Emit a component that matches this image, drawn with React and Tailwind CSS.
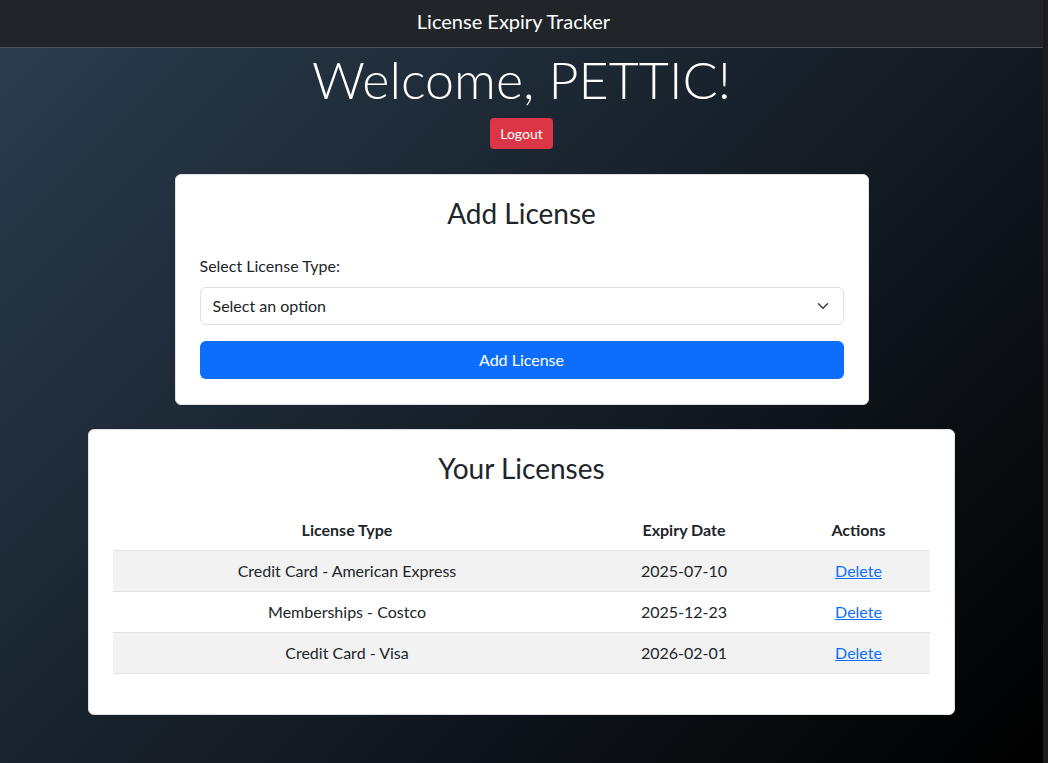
import { useState } from "react";

const licenses = [
  { id: 1, type: "Credit Card - American Express", expiry: "2025-07-10" },
  { id: 2, type: "Memberships - Costco", expiry: "2025-12-23" },
  { id: 3, type: "Credit Card - Visa", expiry: "2026-02-01" },
];

export default function App() {
  const [choice, setChoice] = useState("");
  const [rows, setRows] = useState(licenses);

  return (
    <div className="flex min-h-[763px] font-['Lato','Noto_Sans',sans-serif] text-[#212529]">
      <div className="flex-1 min-h-[763px] bg-[linear-gradient(135deg,#2c3e50,#000)]">
        <nav className="flex h-12 items-center justify-center border-b border-[#4b5056] bg-[#212529] pb-[5px]">
          <span className="mr-4 text-[20px] text-white">License Expiry Tracker</span>
        </nav>

        <div className="flex flex-col items-center pb-12">
          <h1 className="text-[52px] font-light leading-[62px] text-white">Welcome, PETTIC!</h1>
          <button className="mt-2 h-[31px] rounded-[4px] bg-[#dc3545] px-[10px] text-[14px] leading-[21px] text-white">
            Logout
          </button>

          <section className="mt-[25px] w-[694px] rounded-md border border-[#dee2e6] bg-white px-6 pt-6 pb-[25px]">
            <h3 className="mb-[27px] text-center text-[28px] leading-[28px]">Add License</h3>
            <label className="mb-[9px] block text-[16px] leading-6">Select License Type:</label>
            <div className="relative mb-4">
              <select
                value={choice}
                onChange={(e) => setChoice(e.target.value)}
                className="block h-[38px] w-full appearance-none rounded-md border border-[#dee2e6] bg-white px-3 text-[16px] outline-none"
              >
                <option value="">Select an option</option>
                <option value="cc">Credit Card</option>
                <option value="mem">Memberships</option>
              </select>
              <svg
                className="pointer-events-none absolute right-[13px] top-[13px]"
                width="16" height="12" viewBox="0 0 16 16" fill="none"
                stroke="#343a40" strokeWidth="2" strokeLinecap="round" strokeLinejoin="round"
              >
                <path d="m2 5 6 6 6-6" />
              </svg>
            </div>
            <button className="h-[38px] w-full rounded-md bg-[#0d6efd] text-[16px] text-white">
              Add License
            </button>
          </section>

          <section className="mt-6 w-[867px] rounded-md border border-[#dee2e6] bg-white p-6">
            <h2 className="mb-[28px] text-center text-[28px] leading-[28px]">Your Licenses</h2>
            <table className="mb-4 w-full border-collapse text-center text-[16px] leading-6">
              <thead>
                <tr className="border-b border-[#dee2e6]">
                  <th className="w-[468px] py-2 font-bold">License Type</th>
                  <th className="w-[206px] py-2 font-bold">Expiry Date</th>
                  <th className="py-2 font-bold">Actions</th>
                </tr>
              </thead>
              <tbody>
                {rows.map((r, i) => (
                  <tr key={r.id} className={`border-b border-[#dee2e6] ${i % 2 === 0 ? "bg-[#f2f2f2]" : "bg-white"}`}>
                    <td className="py-2">{r.type}</td>
                    <td className="py-2">{r.expiry}</td>
                    <td className="py-2">
                      <a
                        href="#"
                        onClick={(e) => { e.preventDefault(); setRows(rows.filter((x) => x.id !== r.id)); }}
                        className="text-[#0d6efd] underline"
                      >
                        Delete
                      </a>
                    </td>
                  </tr>
                ))}
              </tbody>
            </table>
          </section>
        </div>
      </div>
      <div className="w-[5px] shrink-0 bg-[#1c1c1c]" />
    </div>
  );
}
